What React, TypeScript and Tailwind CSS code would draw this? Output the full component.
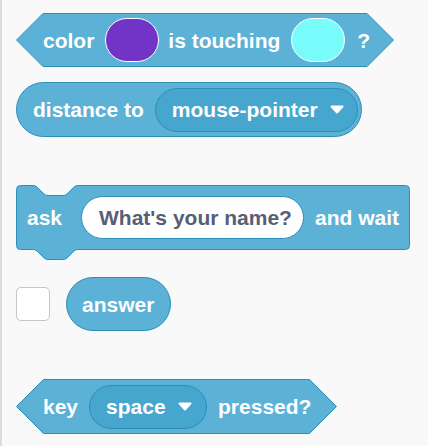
import React from 'react'

const FILL = '#5cb1d6'
const STROKE = '#2e8eb8'

const hexPath = (w: number, h: number) => {
    const d = h / 2
    return `M ${d},0.5 H ${w - d} L ${w - 0.5},${d} L ${w - d},${h - 0.5} H ${d} L 0.5,${d} Z`
}

const stackPath = (w: number, h: number) =>
    `M 0.5,4.5 A 4,4 0 0 1 4.5,0.5 H 17 c 2.5,0 3.75,1.25 5,2.5 l 5,5 c 1.25,1.25 2.5,2.5 5,2.5 h 15 c 2.5,0 3.75,-1.25 5,-2.5 l 5,-5 c 1.25,-1.25 2.5,-2.5 5,-2.5 H ${w - 4.5} A 4,4 0 0 1 ${w - 0.5},4.5 V ${h - 4.5} A 4,4 0 0 1 ${w - 4.5},${h - 0.5} H 62 c -2.5,0 -3.75,1.25 -5,2.5 l -5,5 c -1.25,1.25 -2.5,2.5 -5,2.5 h -15 c -2.5,0 -3.75,-1.25 -5,-2.5 l -5,-5 c -1.25,-1.25 -2.5,-2.5 -5,-2.5 H 4.5 A 4,4 0 0 1 0.5,${h - 4.5} Z`

type Shape = 'hex' | 'round' | 'stack'

const Block: React.FC<{ shape: Shape; w: number; h: number; className: string; children: React.ReactNode }> = ({ shape, w, h, className, children }) => (
    <div className={`relative flex items-center shrink-0 ${className}`}>
        <svg className="absolute left-0 top-0 overflow-visible" width={w} height={h}>
            {shape === 'round' ? (
                <rect x={0.5} y={0.5} width={w - 1} height={h - 1} rx={(h - 1) / 2} fill={FILL} stroke={STROKE} />
            ) : (
                <path d={shape === 'hex' ? hexPath(w, h) : stackPath(w, h)} fill={FILL} stroke={STROKE} />
            )}
        </svg>
        {children}
    </div>
)

const Arrow = () => (
    <svg width="14" height="9" viewBox="0 0 14 9" className="shrink-0">
        <path d="M1.5 1.5 H12.5 L7 7.5 Z" fill="#fff" stroke="#fff" strokeWidth="2" strokeLinejoin="round" />
    </svg>
)

const Dropdown: React.FC<{ label: string; className: string }> = ({ label, className }) => (
    <div className={`relative flex items-center gap-[12px] h-[44px] rounded-full border border-[#2e8eb8] bg-[#47a6ce] pl-[16px] ${className}`}>
        <span>{label}</span>
        <Arrow />
    </div>
)

const Swatch: React.FC<{ color: string }> = ({ color }) => (
    <div className="w-[54px] h-[44px] rounded-full border border-white" style={{ backgroundColor: color }} />
)

export default function App() {
    return (
        <div className="w-[428px] h-[446px] bg-[#f9f9f9] border-l-2 border-[#dcdcdc] pl-[14px] pt-[13px] flex flex-col items-start overflow-hidden font-['Liberation_Sans',Arial,sans-serif] font-bold text-[21px] leading-none text-white">
            {/* color is touching color */}
            <Block shape="hex" w={378} h={54} className="w-[378px] h-[54px]">
                <div className="relative flex items-center pl-[27px]">
                    <span>color</span>
                    <div className="ml-[11px]"><Swatch color="#7233c7" /></div>
                    <span className="ml-[9px]">is touching</span>
                    <div className="ml-[11px]"><Swatch color="#78fbfb" /></div>
                    <span className="ml-[12px]">?</span>
                </div>
            </Block>

            {/* distance to */}
            <Block shape="round" w={346} h={55} className="w-[346px] h-[55px] mt-[15px]">
                <div className="relative flex items-center pl-[17px]">
                    <span>distance to</span>
                    <Dropdown label="mouse-pointer" className="ml-[11px] w-[203px]" />
                </div>
            </Block>

            {/* ask and wait */}
            <Block shape="stack" w={394} h={65} className="w-[394px] h-[65px] mt-[48px]">
                <div className="relative flex items-center pl-[11px]">
                    <span>ask</span>
                    <div className="ml-[19px] h-[43px] w-[223px] rounded-full border border-[#2e8eb8] bg-white flex items-center pl-[17px] text-[#575e75]">
                        What's your name?
                    </div>
                    <span className="ml-[11px]">and wait</span>
                </div>
            </Block>

            {/* answer */}
            <div className="flex items-center gap-[16px] mt-[27px]">
                <div className="w-[34px] h-[34px] rounded-[5px] border border-[#c6c6c6] bg-white" />
                <Block shape="round" w={105} h={54} className="w-[105px] h-[54px]">
                    <span className="relative pl-[16px]">answer</span>
                </Block>
            </div>

            {/* key pressed */}
            <Block shape="hex" w={321} h={55} className="w-[321px] h-[55px] mt-[48px]">
                <div className="relative flex items-center pl-[27px]">
                    <span>key</span>
                    <Dropdown label="space" className="ml-[11px] w-[118px]" />
                    <span className="ml-[11px]">pressed?</span>
                </div>
            </Block>
        </div>
    )
}
